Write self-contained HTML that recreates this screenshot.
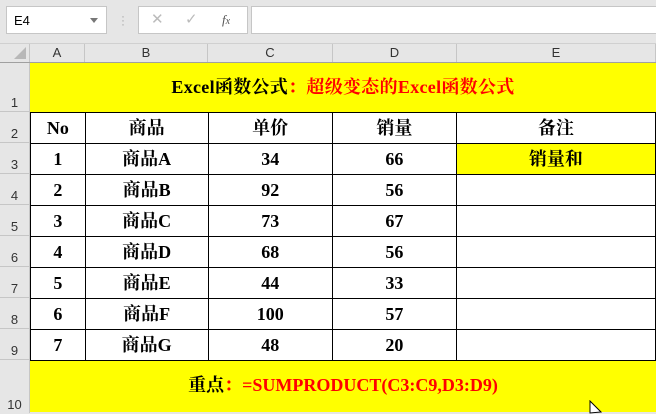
<!DOCTYPE html>
<html><head><meta charset="utf-8"><style>
body{margin:0;width:656px;height:412px;overflow:hidden;background:#e6e6e6;font-family:"Liberation Sans",sans-serif;position:relative}
.a{position:absolute;box-sizing:border-box}
.ser{font-family:"Liberation Serif","Noto Serif CJK SC",serif;font-weight:bold;font-size:18px;color:#000}
.ch{font-size:13px;color:#333;text-align:center;line-height:18px;top:44px;height:18px;border-right:1px solid #c6c6c6}
.rh{left:0;width:30px;font-size:13px;color:#333;text-align:center;border-bottom:1px solid #c6c6c6;border-right:1px solid #c6c6c6;line-height:14px;display:flex;align-items:flex-end;justify-content:center;padding-bottom:1px}
table{border-collapse:collapse;position:absolute;left:30px;top:112px;table-layout:fixed}
td{border:1px solid #000;height:30px;padding:0;text-align:center;background:#fff;line-height:30px;overflow:hidden}
td div{height:30px;line-height:30px;white-space:nowrap}
.c{position:relative;top:0px}
</style></head><body>
<div class="a" style="left:6px;top:6px;width:101px;height:28px;background:#fff;border:1px solid #c6c6c6;font-size:13px;padding:6px 7px">E4<span style="position:absolute;right:8px;top:11px;border:4px solid transparent;border-top:5px solid #777"></span></div>
<div class="a" style="left:121px;top:14px;color:#aaa;font-size:12px;line-height:4px">·<br>·<br>·</div>
<div class="a" style="left:138px;top:6px;width:110px;height:28px;background:#fff;border:1px solid #c6c6c6;font-size:15px;color:#bbb">
<span class="a" style="left:12px;top:3px">✕</span><span class="a" style="left:46px;top:3px">✓</span><span class="a" style="left:83px;top:5px;color:#555;font-family:'Liberation Serif',serif;font-style:italic;font-size:13px">f<span style="font-size:10px">x</span></span></div>
<div class="a" style="left:251px;top:6px;width:410px;height:28px;background:#fff;border:1px solid #c6c6c6"></div>
<div class="a" style="left:0;top:43px;width:656px;height:1px;background:#d0d0d0"></div>
<div class="a" style="left:0;top:44px;width:30px;height:18px;border-right:1px solid #c6c6c6"><span class="a" style="right:3px;bottom:3px;border-left:12px solid transparent;border-bottom:12px solid #b8b8b8"></span></div>
<div class="a ch" style="left:30px;width:55px">A</div>
<div class="a ch" style="left:85px;width:123px">B</div>
<div class="a ch" style="left:208px;width:125px">C</div>
<div class="a ch" style="left:333px;width:124px">D</div>
<div class="a ch" style="left:457px;width:199px">E</div>
<div class="a" style="left:0;top:62px;width:656px;height:1px;background:#a0a0a0"></div>
<div class="a rh" style="top:63px;height:49px">1</div>
<div class="a rh" style="top:112px;height:31px">2</div>
<div class="a rh" style="top:143px;height:31px">3</div>
<div class="a rh" style="top:174px;height:31px">4</div>
<div class="a rh" style="top:205px;height:31px">5</div>
<div class="a rh" style="top:236px;height:31px">6</div>
<div class="a rh" style="top:267px;height:31px">7</div>
<div class="a rh" style="top:298px;height:31px">8</div>
<div class="a rh" style="top:329px;height:31px">9</div>
<div class="a rh" style="top:360px;height:53px;border-bottom:none">10</div>
<div class="a ser" style="left:30px;top:63px;width:626px;height:49px;background:#ffff00;text-align:center;line-height:49px;letter-spacing:0.3px">Excel函数公式<span style="color:#f00">：超级变态的Excel函数公式</span></div>
<table class="ser">
<colgroup><col style="width:55px"><col style="width:123px"><col style="width:125px"><col style="width:124px"><col style="width:200px"></colgroup>
<tr><td><div>No</div></td><td><div class="c">商品</div></td><td><div class="c">单价</div></td><td><div class="c">销量</div></td><td><div class="c">备注</div></td></tr>
<tr><td><div>1</div></td><td><div class="c">商品A</div></td><td><div>34</div></td><td><div>66</div></td><td style="background:#ffff00"><div class="c">销量和</div></td></tr>
<tr><td><div>2</div></td><td><div class="c">商品B</div></td><td><div>92</div></td><td><div>56</div></td><td></td></tr>
<tr><td><div>3</div></td><td><div class="c">商品C</div></td><td><div>73</div></td><td><div>67</div></td><td></td></tr>
<tr><td><div>4</div></td><td><div class="c">商品D</div></td><td><div>68</div></td><td><div>56</div></td><td></td></tr>
<tr><td><div>5</div></td><td><div class="c">商品E</div></td><td><div>44</div></td><td><div>33</div></td><td></td></tr>
<tr><td><div>6</div></td><td><div class="c">商品F</div></td><td><div>100</div></td><td><div>57</div></td><td></td></tr>
<tr><td><div>7</div></td><td><div class="c">商品G</div></td><td><div>48</div></td><td><div>20</div></td><td></td></tr>
</table>
<div class="a ser" style="left:30px;top:361px;width:626px;height:51px;background:#ffff00;text-align:center;line-height:48px">重点<span style="color:#f00">：=SUMPRODUCT(C3:C9,D3:D9)</span></div>
<svg class="a" style="left:589px;top:400px" width="14" height="14"><path d="M1 1 L1 13 L12 12 Z" fill="#fff" stroke="#000"/></svg>
</body></html>
